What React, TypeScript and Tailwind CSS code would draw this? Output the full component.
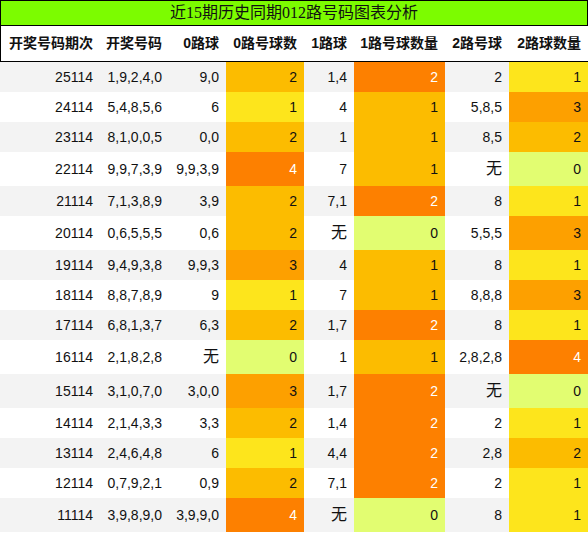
import React from 'react';

type Cell = { v: string; c?: string };

// 颜色：各"数量"列的色阶
const Y = 'bg-[#fde51c] text-[#111]';
const G = 'bg-[#fcbc00] text-[#111]';
const M = 'bg-[#fda000] text-[#111]';
const O = 'bg-[#fd8000] text-white';
const L = 'bg-[#e2fd71] text-[#111]';

const rows: { tall?: boolean; cells: Cell[] }[] = [
  { cells: [{ v: '25114' }, { v: '1,9,2,4,0' }, { v: '9,0' }, { v: '2', c: G }, { v: '1,4' }, { v: '2', c: O }, { v: '2' }, { v: '1', c: Y }] },
  { cells: [{ v: '24114' }, { v: '5,4,8,5,6' }, { v: '6' }, { v: '1', c: Y }, { v: '4' }, { v: '1', c: G }, { v: '5,8,5' }, { v: '3', c: M }] },
  { cells: [{ v: '23114' }, { v: '8,1,0,0,5' }, { v: '0,0' }, { v: '2', c: G }, { v: '1' }, { v: '1', c: G }, { v: '8,5' }, { v: '2', c: G }] },
  { tall: true, cells: [{ v: '22114' }, { v: '9,9,7,3,9' }, { v: '9,9,3,9' }, { v: '4', c: O }, { v: '7' }, { v: '1', c: G }, { v: '无' }, { v: '0', c: L }] },
  { cells: [{ v: '21114' }, { v: '7,1,3,8,9' }, { v: '3,9' }, { v: '2', c: G }, { v: '7,1' }, { v: '2', c: O }, { v: '8' }, { v: '1', c: Y }] },
  { tall: true, cells: [{ v: '20114' }, { v: '0,6,5,5,5' }, { v: '0,6' }, { v: '2', c: G }, { v: '无' }, { v: '0', c: L }, { v: '5,5,5' }, { v: '3', c: M }] },
  { cells: [{ v: '19114' }, { v: '9,4,9,3,8' }, { v: '9,9,3' }, { v: '3', c: M }, { v: '4' }, { v: '1', c: G }, { v: '8' }, { v: '1', c: Y }] },
  { cells: [{ v: '18114' }, { v: '8,8,7,8,9' }, { v: '9' }, { v: '1', c: Y }, { v: '7' }, { v: '1', c: G }, { v: '8,8,8' }, { v: '3', c: M }] },
  { cells: [{ v: '17114' }, { v: '6,8,1,3,7' }, { v: '6,3' }, { v: '2', c: G }, { v: '1,7' }, { v: '2', c: O }, { v: '8' }, { v: '1', c: Y }] },
  { tall: true, cells: [{ v: '16114' }, { v: '2,1,8,2,8' }, { v: '无' }, { v: '0', c: L }, { v: '1' }, { v: '1', c: G }, { v: '2,8,2,8' }, { v: '4', c: O }] },
  { tall: true, cells: [{ v: '15114' }, { v: '3,1,0,7,0' }, { v: '3,0,0' }, { v: '3', c: M }, { v: '1,7' }, { v: '2', c: O }, { v: '无' }, { v: '0', c: L }] },
  { cells: [{ v: '14114' }, { v: '2,1,4,3,3' }, { v: '3,3' }, { v: '2', c: G }, { v: '1,4' }, { v: '2', c: O }, { v: '2' }, { v: '1', c: Y }] },
  { cells: [{ v: '13114' }, { v: '2,4,6,4,8' }, { v: '6' }, { v: '1', c: Y }, { v: '4,4' }, { v: '2', c: O }, { v: '2,8' }, { v: '2', c: G }] },
  { cells: [{ v: '12114' }, { v: '0,7,9,2,1' }, { v: '0,9' }, { v: '2', c: G }, { v: '7,1' }, { v: '2', c: O }, { v: '2' }, { v: '1', c: Y }] },
  { tall: true, cells: [{ v: '11114' }, { v: '3,9,8,9,0' }, { v: '3,9,9,0' }, { v: '4', c: O }, { v: '无' }, { v: '0', c: L }, { v: '8' }, { v: '1', c: Y }] },
];

const headers = ['开奖号码期次', '开奖号码', '0路球', '0路号球数', '1路球', '1路号球数量', '2路号球', '2路球数量'];
const widths = ['w-[100px]', 'w-[69px]', 'w-[57px]', 'w-[78px]', 'w-[50px]', 'w-[91px]', 'w-[64px]', 'w-[79px]'];

export default function App() {
  return (
    <div className="w-[588px] h-[533px] bg-white overflow-hidden font-['Liberation_Sans','Noto_Sans_CJK_SC',sans-serif]">
      <div className="h-[26px] border border-black bg-[#7cfc00] flex items-center justify-center text-[16px] leading-none text-[#111] font-['Liberation_Serif','Noto_Sans_CJK_SC',serif]">
        近15期历史同期012路号码图表分析
      </div>
      <div className="flex h-[36px] border-l border-b border-black">
        {headers.map((h, i) => (
          <div
            key={h}
            className={`${i === 0 ? 'w-[99px]' : widths[i]} flex items-center justify-end pr-[7px] text-[14px] font-bold text-[#111] whitespace-nowrap`}
          >
            {h}
          </div>
        ))}
      </div>
      {rows.map((r, ri) => (
        <div key={ri} className={`flex ${r.tall ? 'h-[34px]' : 'h-[30px]'} ${ri % 2 === 0 ? 'bg-[#f3f3f3]' : 'bg-white'}`}>
          {r.cells.map((cell, ci) => (
            <div
              key={ci}
              className={`${widths[ci]} ${cell.c ?? 'text-[#111]'} flex items-center justify-end pr-[7px] text-[14px] leading-none whitespace-nowrap ${cell.v === '无' ? 'text-[16px]' : ''}`}
            >
              {cell.v}
            </div>
          ))}
        </div>
      ))}
    </div>
  );
}
